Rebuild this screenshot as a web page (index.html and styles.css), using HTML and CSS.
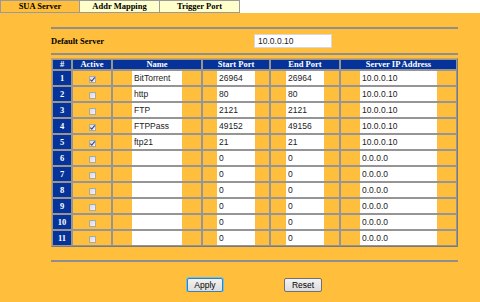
FILE: index.html
```html
<!DOCTYPE html>
<html lang="en">
<head>
    <meta charset="utf-8">
    <title>SUA Server</title>
    <link rel="stylesheet" href="styles.css">
</head>
<body>
    <div class="tabs">
        <div class="tab active">SUA Server</div>
        <div class="tab">Addr Mapping</div>
        <div class="tab">Trigger Port</div>
    </div>

    <div class="content">
        <div class="rule"></div>
        <div class="default-row">
            <span class="label">Default Server</span>
            <input class="field default-ip" type="text" value="10.0.0.10">
        </div>
        <div class="rule rule-2"></div>

        <table class="sua-table">
            <thead>
                <tr>
                    <th class="c-num">#</th>
                    <th class="c-active">Active</th>
                    <th class="c-name">Name</th>
                    <th class="c-start">Start Port</th>
                    <th class="c-end">End Port</th>
                    <th class="c-ip">Server IP Address</th>
                </tr>
            </thead>
            <tbody>
                <tr>
                    <td class="num">1</td>
                    <td><span class="cb checked"><svg viewBox="0 0 7 7" width="7" height="7"><path d="M1.3 3.6 L2.8 5.2 L5.8 1.4" fill="none" stroke="#3a4a78" stroke-width="1.1"/></svg></span></td>
                    <td><input class="cell-input w-name" type="text" value="BitTorrent"></td>
                    <td><input class="cell-input w-port" type="text" value="26964"></td>
                    <td><input class="cell-input w-port" type="text" value="26964"></td>
                    <td><input class="cell-input w-ip" type="text" value="10.0.0.10"></td>
                </tr>
                <tr>
                    <td class="num">2</td>
                    <td><span class="cb"></span></td>
                    <td><input class="cell-input w-name" type="text" value="http"></td>
                    <td><input class="cell-input w-port" type="text" value="80"></td>
                    <td><input class="cell-input w-port" type="text" value="80"></td>
                    <td><input class="cell-input w-ip" type="text" value="10.0.0.10"></td>
                </tr>
                <tr>
                    <td class="num">3</td>
                    <td><span class="cb"></span></td>
                    <td><input class="cell-input w-name" type="text" value="FTP"></td>
                    <td><input class="cell-input w-port" type="text" value="2121"></td>
                    <td><input class="cell-input w-port" type="text" value="2121"></td>
                    <td><input class="cell-input w-ip" type="text" value="10.0.0.10"></td>
                </tr>
                <tr>
                    <td class="num">4</td>
                    <td><span class="cb checked"><svg viewBox="0 0 7 7" width="7" height="7"><path d="M1.3 3.6 L2.8 5.2 L5.8 1.4" fill="none" stroke="#3a4a78" stroke-width="1.1"/></svg></span></td>
                    <td><input class="cell-input w-name" type="text" value="FTPPass"></td>
                    <td><input class="cell-input w-port" type="text" value="49152"></td>
                    <td><input class="cell-input w-port" type="text" value="49156"></td>
                    <td><input class="cell-input w-ip" type="text" value="10.0.0.10"></td>
                </tr>
                <tr>
                    <td class="num">5</td>
                    <td><span class="cb checked"><svg viewBox="0 0 7 7" width="7" height="7"><path d="M1.3 3.6 L2.8 5.2 L5.8 1.4" fill="none" stroke="#3a4a78" stroke-width="1.1"/></svg></span></td>
                    <td><input class="cell-input w-name" type="text" value="ftp21"></td>
                    <td><input class="cell-input w-port" type="text" value="21"></td>
                    <td><input class="cell-input w-port" type="text" value="21"></td>
                    <td><input class="cell-input w-ip" type="text" value="10.0.0.10"></td>
                </tr>
                <tr>
                    <td class="num">6</td>
                    <td><span class="cb"></span></td>
                    <td><input class="cell-input w-name" type="text" value=""></td>
                    <td><input class="cell-input w-port" type="text" value="0"></td>
                    <td><input class="cell-input w-port" type="text" value="0"></td>
                    <td><input class="cell-input w-ip" type="text" value="0.0.0.0"></td>
                </tr>
                <tr>
                    <td class="num">7</td>
                    <td><span class="cb"></span></td>
                    <td><input class="cell-input w-name" type="text" value=""></td>
                    <td><input class="cell-input w-port" type="text" value="0"></td>
                    <td><input class="cell-input w-port" type="text" value="0"></td>
                    <td><input class="cell-input w-ip" type="text" value="0.0.0.0"></td>
                </tr>
                <tr>
                    <td class="num">8</td>
                    <td><span class="cb"></span></td>
                    <td><input class="cell-input w-name" type="text" value=""></td>
                    <td><input class="cell-input w-port" type="text" value="0"></td>
                    <td><input class="cell-input w-port" type="text" value="0"></td>
                    <td><input class="cell-input w-ip" type="text" value="0.0.0.0"></td>
                </tr>
                <tr>
                    <td class="num">9</td>
                    <td><span class="cb"></span></td>
                    <td><input class="cell-input w-name" type="text" value=""></td>
                    <td><input class="cell-input w-port" type="text" value="0"></td>
                    <td><input class="cell-input w-port" type="text" value="0"></td>
                    <td><input class="cell-input w-ip" type="text" value="0.0.0.0"></td>
                </tr>
                <tr>
                    <td class="num">10</td>
                    <td><span class="cb"></span></td>
                    <td><input class="cell-input w-name" type="text" value=""></td>
                    <td><input class="cell-input w-port" type="text" value="0"></td>
                    <td><input class="cell-input w-port" type="text" value="0"></td>
                    <td><input class="cell-input w-ip" type="text" value="0.0.0.0"></td>
                </tr>
                <tr>
                    <td class="num">11</td>
                    <td><span class="cb"></span></td>
                    <td><input class="cell-input w-name" type="text" value=""></td>
                    <td><input class="cell-input w-port" type="text" value="0"></td>
                    <td><input class="cell-input w-port" type="text" value="0"></td>
                    <td><input class="cell-input w-ip" type="text" value="0.0.0.0"></td>
                </tr>
            </tbody>
        </table>

        <div class="rule rule-3"></div>

        <div class="buttons">
            <button class="btn btn-focus" type="button">Apply</button>
            <button class="btn btn-reset" type="button">Reset</button>
        </div>
    </div>
</body>
</html>
```

FILE: styles.css
```css
body {
    margin: 0;
    padding: 0;
    background-color: #ffbe3c;
    font-family: 'Liberation Serif', serif;
    font-size: 8.5px;
    color: #000;
}

/* tab strip */
.tabs {
    display: flex;
    background-color: #fff;
    height: 13px;
}

.tab {
    width: 80px;
    height: 13px;
    box-sizing: border-box;
    border: 1px solid #9a9a9a;
    border-left: none;
    background-color: #ffffcc;
    font-weight: bold;
    text-align: center;
    line-height: 11px;
}

.tab:first-child {
    border-left: 1px solid #9a9a9a;
}

.tab.active {
    background-color: #ffbe3c;
}

.content {
    width: 407px;
    padding-left: 51px;
}

.rule {
    height: 2px;
    background-color: #8e8e8e;
    margin-top: 14px;
}

.rule-2 {
    margin-top: 5px;
}

.rule-3 {
    margin-top: 13px;
}

.default-row {
    display: grid;
    grid-template-columns: 203px 1fr;
    align-items: center;
    margin-top: 4px;
    height: 15px;
}

.label {
    font-weight: bold;
}

.field {
    font-family: 'Liberation Sans', Arial, sans-serif;
    font-size: 8.5px;
    color: #222;
    box-sizing: border-box;
    outline: none;
}

.default-ip {
    width: 78px;
    height: 14px;
    border: 1px solid #d8d8d8;
    padding: 0 3px;
    background-color: #fff;
}

/* main table */
.sua-table {
    margin-top: 3px;
    width: 407px;
    table-layout: fixed;
    border-collapse: separate;
    border-spacing: 0;
    border: 1px solid;
    border-color: #c9a45a #7a7a7a #7a7a7a #c9a45a;
}

.sua-table th,
.sua-table td {
    box-sizing: border-box;
    border: 1px solid #959595;
    padding: 0;
    text-align: center;
    vertical-align: middle;
}

.sua-table th {
    background-color: #06339a;
    color: #fff;
    font-weight: bold;
    height: 11px;
    line-height: 9px;
}

.sua-table td {
    height: 16px;
}

.c-num { width: 20px; }
.c-active { width: 40px; }
.c-name { width: 90px; }
.c-start { width: 68px; }
.c-end { width: 70px; }
.c-ip { width: 117px; }

.sua-table td.num {
    background-color: #06339a;
    color: #fff;
    font-weight: bold;
}

.cb {
    display: inline-block;
    width: 7px;
    height: 7px;
    box-sizing: border-box;
    border: 1px solid #a9a9a9;
    background: linear-gradient(135deg, #d8d8d8, #f4f4f4);
    vertical-align: middle;
    position: relative;
}

.cb svg {
    position: absolute;
    left: -1px;
    top: -1px;
}

.cell-input {
    font-family: 'Liberation Sans', Arial, sans-serif;
    font-size: 8.5px;
    color: #222;
    height: 14px;
    box-sizing: border-box;
    border: none;
    padding: 0 2px;
    margin: 0;
    background-color: #fff;
    outline: none;
    vertical-align: middle;
    display: block;
    margin: 0 auto;
}

.w-name { width: 50px; }
.w-port { width: 38px; }
.w-ip { width: 77px; }

/* buttons */
.buttons {
    display: flex;
    margin-top: 16px;
    padding-left: 136px;
}

.btn {
    font-family: 'Liberation Sans', Arial, sans-serif;
    font-size: 8.5px;
    color: #000;
    height: 14px;
    padding: 0;
    border: 1px solid #707070;
    border-radius: 2px;
    background: linear-gradient(#f3f3f3, #dcdcdc);
}

.btn-focus {
    width: 36px;
    border-color: #3c7fb1;
    box-shadow: 0 0 0 1px #62c3ec;
}

.btn-reset {
    width: 38px;
    margin-left: 61px;
}
```
